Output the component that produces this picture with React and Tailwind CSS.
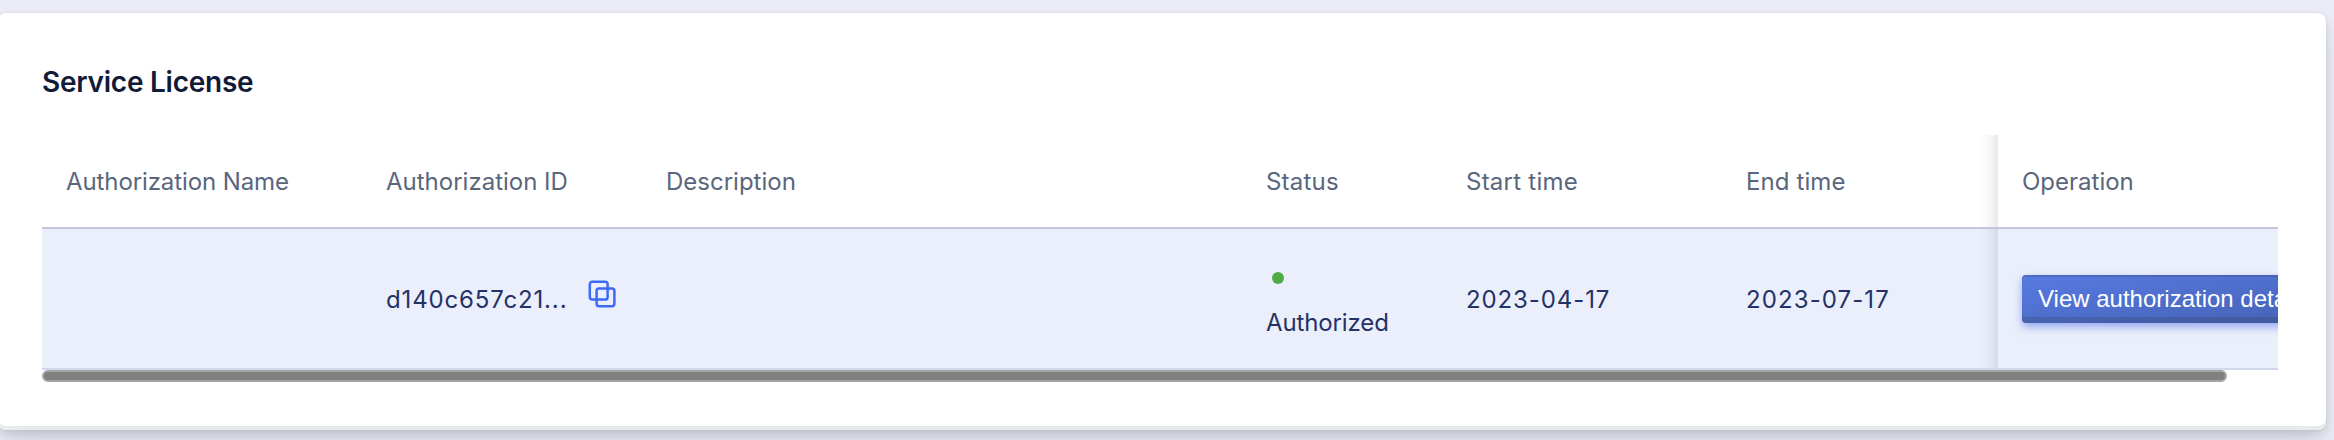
const columns = [
  { label: "Authorization Name", width: "w-[320px]", tracking: "tracking-[-0.1px]" },
  { label: "Authorization ID", width: "w-[280px]", tracking: "tracking-normal" },
  { label: "Description", width: "w-[600px]", tracking: "tracking-normal" },
  { label: "Status", width: "w-[200px]", tracking: "tracking-[0.2px]" },
  { label: "Start time", width: "w-[280px]", tracking: "tracking-[0.25px]" },
  { label: "End time", width: "w-[276px]", tracking: "tracking-[0.1px]" },
];

function CopyIcon() {
  return (
    <svg className="ml-5 mt-[-11px] size-7 shrink-0" viewBox="0 0 28 28" fill="none" stroke="#3d6af5" strokeWidth="2.5">
      <rect x="1.8" y="1.8" width="17.8" height="17.8" rx="2.4" />
      <rect x="8.6" y="8.4" width="17.8" height="17.8" rx="2.4" />
    </svg>
  );
}

function EdgeShadow() {
  return (
    <div className="absolute inset-y-0 right-full w-[60px] overflow-hidden">
      <div className="absolute -inset-y-5 left-full w-5 shadow-[0_0_20px_rgba(0,0,0,0.18)]" />
    </div>
  );
}

function Cell({ width, children }) {
  return <div className={`${width} flex shrink-0 items-center pt-[2px] pl-6`}>{children}</div>;
}

export default function App() {
  return (
    <div className="h-[440px] w-[2334px] overflow-hidden bg-[#eaebf5] pt-[13px] font-['Inter',sans-serif] text-2xl">
      <section className="-ml-[2px] flex h-[417px] w-[2328px] flex-col rounded-lg bg-white pl-11 shadow-[inset_0_-4px_0_#e9eaeb,0_0_2px_rgba(45,35,66,0.1),0_4px_8px_rgba(45,55,66,0.12),0_14px_26px_-6px_rgba(45,55,66,0.16)]">
        <h2 className="mt-[49px] h-[73px] text-[28px] leading-10 font-semibold tracking-[-0.25px] text-[#121a3a]">Service License</h2>

        <div className="w-[2236px] overflow-hidden">
          <div className="flex h-[94px] border-b-2 border-[#c3c8d9] text-[#5a667c]">
            {columns.map((c) => (
              <Cell key={c.label} width={c.width}><span className={c.tracking}>{c.label}</span></Cell>
            ))}
            <div className="relative flex w-[280px] shrink-0 items-center bg-white pt-[2px] pl-6">
              <EdgeShadow />
              Operation
            </div>
          </div>

          <div className="flex h-[141px] border-b-2 border-[#d2d6e9] bg-[#ebeffc] text-[#243265]">
            <Cell width="w-[320px]" />
            <Cell width="w-[280px]">
              <span className="w-[182px] tracking-[0.85px] whitespace-nowrap">d140c657c21...</span>
              <CopyIcon />
            </Cell>
            <Cell width="w-[600px]" />
            <Cell width="w-[200px]">
              <div className="flex flex-col">
                <span className="mt-[19px] ml-[6px] size-3 rounded-full bg-[#50aa46]" />
                <span className="mt-4 leading-[46px] tracking-[-0.12px]">Authorized</span>
              </div>
            </Cell>
            <Cell width="w-[280px]"><span className="tracking-[0.9px]">2023-04-17</span></Cell>
            <Cell width="w-[276px]"><span className="tracking-[1.1px]">2023-07-17</span></Cell>
            <div className="relative flex w-[280px] shrink-0 items-center bg-[#ebeffc] pl-6">
              <EdgeShadow />
              <button className="h-12 w-[292px] shrink-0 rounded bg-linear-to-br from-[#587be2] to-[#4562b5] pl-4 text-left font-['Liberation_Sans',sans-serif] whitespace-nowrap text-white shadow-[inset_0_2px_0_rgba(58,65,111,0.28),inset_0_-6px_0_rgba(58,75,121,0.35),0_4px_8px_rgba(65,100,230,0.5)]">
                View authorization details
              </button>
            </div>
          </div>
        </div>
        <div className="h-3 w-[2185px] rounded-full border-2 border-[#a5a5a5] bg-[#808080]" />
      </section>
    </div>
  );
}
